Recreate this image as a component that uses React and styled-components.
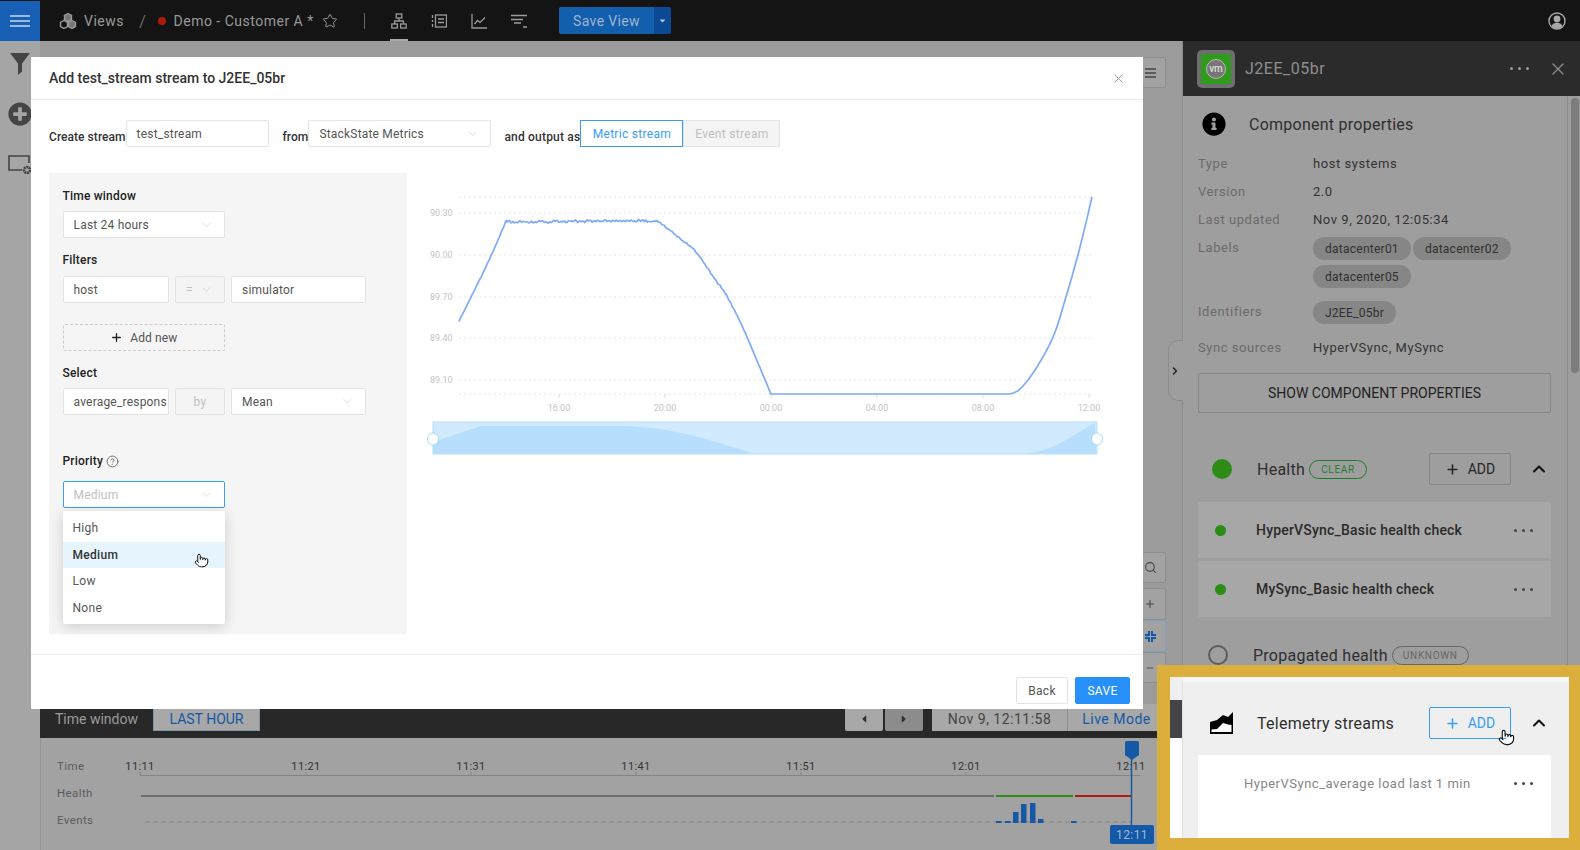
import React from 'react';
import styled, { createGlobalStyle } from 'styled-components';
import { Star, Search, Plus, Minus, X, ChevronDown, ChevronUp, ChevronRight, Pointer, CircleHelp } from 'lucide-react';
import { FaInfoCircle, FaPlusCircle, FaCaretLeft, FaCaretRight, FaCaretDown } from 'react-icons/fa';

const Global = createGlobalStyle`
  html, body { margin: 0; padding: 0; background: #9b9b9b; }
  * { box-sizing: border-box; }
  body { font-family: Roboto, "Liberation Sans", sans-serif; font-size: 13px; color: #333; }
`;

const Page = styled.div`
  position: relative;
  width: 1580px;
  height: 850px;
  overflow: hidden;
  display: flex;
  flex-direction: column;
`;

/* top bar */
const TopBar = styled.header`
  height: 41px;
  flex: none;
  display: flex;
  align-items: center;
  background: #141414;
  color: #999;
  font-size: 14px;
  letter-spacing: 0.5px;
`;
const MenuButton = styled.div`
  width: 40px;
  height: 40px;
  margin-top: 1px;
  flex: none;
  display: flex;
  flex-direction: column;
  justify-content: center;
  gap: 3px;
  padding: 0 10px;
  background: #1760b6;
  span { display: block; height: 2px; background: #9db9d9; }
`;
const Crumbs = styled.div`
  display: flex;
  align-items: center;
  margin-left: 19px;
  width: 305px;
  flex: none;
`;
const CrumbText = styled.span`
  margin-left: ${p => p.$gap}px;
`;
const StarSlot = styled.span`
  display: flex;
  margin-left: 8px;
`;
const Slash = styled.span`
  margin-left: 15px;
  color: #666;
  font-size: 17px;
`;
const StatusDot = styled.span`
  width: 8px;
  height: 8px;
  margin-left: 11px;
  border-radius: 50%;
  background: #ad1a0c;
`;
const Divider = styled.span`
  width: 1px;
  height: 16px;
  background: #666;
  flex: none;
`;
const ViewIcons = styled.div`
  display: flex;
  gap: 24px;
  margin-left: 26px;
  height: 41px;
`;
const ViewIcon = styled.div`
  width: 16px;
  display: flex;
  align-items: center;
  justify-content: center;
  position: relative;
  &::after {
    content: '';
    display: ${p => (p.$active ? 'block' : 'none')};
    position: absolute;
    left: -1px;
    right: -1px;
    bottom: 0;
    height: 2px;
    background: #aaa;
  }
`;
const SaveGroup = styled.div`
  display: flex;
  height: 27px;
  margin-left: 32px;
  border-radius: 2px;
  overflow: hidden;
  color: #9fb4cd;
  letter-spacing: 0.35px;
`;
const SaveMain = styled.div`
  width: 95px;
  display: flex;
  align-items: center;
  justify-content: center;
  background: #125fae;
`;
const SaveCaret = styled.div`
  width: 17px;
  display: flex;
  align-items: center;
  justify-content: center;
  background: #0c4a95;
`;
const UserSlot = styled.div`
  margin-left: auto;
  margin-right: 14px;
  display: flex;
`;

/* page body */
const Body = styled.div`
  flex: 1;
  display: flex;
  min-height: 0;
`;
const Sidebar = styled.aside`
  width: 40px;
  flex: none;
  background: #a5a5a5;
  display: flex;
  flex-direction: column;
  align-items: center;
  padding: 12px 0 0 0;
  gap: 27px;
  color: #444;
`;
const Main = styled.main`
  flex: 1;
  display: flex;
  flex-direction: column;
  min-width: 0;
`;
const Canvas = styled.div`
  flex: 1;
  display: flex;
  flex-direction: column;
  justify-content: space-between;
  align-items: flex-end;
  padding: 16px 16px 21px 0;
  background: #9b9b9b;
`;
const ToolGroup = styled.div`
  display: flex;
  flex-direction: column;
  gap: 5px;
`;
const ToolStack = styled.div`
  display: flex;
  flex-direction: column;
`;
const ToolButton = styled.div`
  width: 32px;
  height: ${p => p.$h || 32}px;
  display: flex;
  align-items: center;
  justify-content: center;
  background: #a2a2a2;
  border: 1px solid ${p => (p.$active ? '#7f9fbf' : '#8e8e8e')};
  border-radius: 2px;
  color: #444;
`;
const TimeBar = styled.div`
  height: 34px;
  flex: none;
  display: flex;
  align-items: stretch;
  padding: 0 24px 7px 15px;
  background: #282828;
  color: #9a9a9a;
  font-size: 14px;
`;
const TimeLabel = styled.div`
  display: flex;
  align-items: center;
  padding-top: 3px;
`;
const TimeTab = styled.div`
  margin-left: 15px;
  width: 107px;
  display: flex;
  align-items: center;
  justify-content: center;
  padding-top: 3px;
  background: #a8a8a8;
  border: 1px solid #7e98b2;
  border-top: 0;
  color: #1458a6;
`;
const TimeControls = styled.div`
  margin-left: auto;
  display: flex;
  align-items: stretch;
  letter-spacing: 0.5px;
`;
const StepButton = styled.div`
  width: 38px;
  margin-left: ${p => p.$ml || 0}px;
  display: flex;
  align-items: center;
  justify-content: center;
  padding-top: 3px;
  background: ${p => (p.$dim ? '#8c8c8c' : '#a8a8a8')};
  border-radius: 2px;
  color: #333;
`;
const DateBox = styled.div`
  width: 135px;
  margin-left: 9px;
  display: flex;
  align-items: center;
  justify-content: center;
  padding-top: 3px;
  background: #a8a8a8;
  color: #444;
`;
const LiveBox = styled.div`
  width: 91px;
  display: flex;
  align-items: center;
  justify-content: center;
  padding: 3px 0 0 7px;
  background: #a8a8a8;
  border-left: 1px solid #8e8e8e;
  color: #1458a6;
`;
const Timeline = styled.svg`
  display: block;
  width: 1142px;
  height: 112px;
  flex: none;
  background: #a2a2a2;
  font-family: Roboto, "Liberation Sans", sans-serif;
`;

/* right panel */
const Panel = styled.aside`
  position: relative;
  width: 398px;
  flex: none;
  background: #9e9e9e;
  border-left: 1px solid #8c8c8c;
  display: flex;
  flex-direction: column;
`;
const CollapseTab = styled.div`
  position: absolute;
  left: -15px;
  top: 299px;
  width: 15px;
  height: 61px;
  display: flex;
  align-items: center;
  background: #9e9e9e;
  border: 1px solid #8c8c8c;
  border-right: 0;
  border-radius: 10px 0 0 10px;
  color: #222;
`;
const PanelHeader = styled.div`
  height: 55px;
  flex: none;
  display: flex;
  align-items: center;
  padding: 0 12px 0 14px;
  background: #2b2b2b;
  color: #8f8f8f;
`;
const VmBadge = styled.div`
  width: 38px;
  height: 38px;
  flex: none;
  display: flex;
  align-items: center;
  justify-content: center;
  border-radius: 5px;
  background: #6e6e6e;
`;
const VmSquare = styled.div`
  width: 30px;
  height: 30px;
  display: flex;
  align-items: center;
  justify-content: center;
  background: #2f9a1c;
`;
const VmCircle = styled.div`
  width: 20px;
  height: 20px;
  display: flex;
  align-items: center;
  justify-content: center;
  border-radius: 50%;
  background: #777;
  border: 1.5px solid #bbb;
  color: #ddd;
  font-size: 10px;
  font-weight: 500;
`;
const PanelTitle = styled.div`
  margin-left: 10px;
  font-size: 16px;
  letter-spacing: 0.5px;
`;
const DotRow = styled.div`
  margin-left: auto;
  display: flex;
  gap: 5px;
  span {
    width: 3px;
    height: 3px;
    border-radius: 50%;
    background: ${p => p.$color || '#444'};
  }
`;
const CloseSlot = styled.div`
  display: flex;
  margin-left: 19px;
`;
const PanelBody = styled.div`
  flex: 1;
  min-height: 0;
  overflow: hidden;
  width: 385px;
  padding: 16px 16px 0 15px;
  border-right: 1px solid #8c8c8c;
`;
const Thumb = styled.div`
  position: absolute;
  right: 1px;
  top: 57px;
  width: 8px;
  height: 275px;
  border-radius: 4px;
  background: #7c7c7c;
`;
const SectionHead = styled.div`
  display: flex;
  align-items: center;
  padding-left: ${p => p.$indent}px;
  min-height: ${p => p.$h}px;
  margin-top: ${p => p.$mt || 0}px;
`;
const SectionTitle = styled.div`
  margin-left: ${p => p.$gap}px;
  font-size: 16px;
  letter-spacing: 0.25px;
  color: #2f2f2f;
`;
const PropRow = styled.div`
  display: grid;
  grid-template-columns: 115px 1fr;
  margin-top: ${p => p.$mt || 0}px;
  line-height: 28px;
  letter-spacing: 0.55px;
`;
const PropKey = styled.div`
  color: #6b6b6b;
`;
const PropValue = styled.div`
  color: #333;
`;
const Pills = styled.div`
  display: flex;
  flex-wrap: wrap;
  gap: 5px 2px;
  padding-top: 3px;
`;
const Pill = styled.span`
  height: 23px;
  padding: 0 12px;
  display: inline-flex;
  align-items: center;
  border-radius: 12px;
  background: #868686;
  color: #2f2f2f;
  font-size: 12px;
  letter-spacing: 0.25px;
`;
const WideButton = styled.div`
  height: 40px;
  margin-top: 11px;
  display: flex;
  align-items: center;
  justify-content: center;
  border: 1px solid #868686;
  border-radius: 2px;
  color: #222;
  font-size: 14px;
`;
const StatusBall = styled.span`
  width: 20px;
  height: 20px;
  flex: none;
  border-radius: 50%;
  background: ${p => (p.$hollow ? 'transparent' : '#2c8c16')};
  border: ${p => (p.$hollow ? '2px solid #5c5c5c' : '0')};
`;
const StatePill = styled.span`
  margin-left: 4px;
  height: 19px;
  width: ${p => p.$w}px;
  display: inline-flex;
  align-items: center;
  justify-content: center;
  border: 1px solid ${p => p.$color};
  border-radius: 10px;
  color: ${p => p.$color};
  font-size: 10px;
  letter-spacing: 0.7px;
`;
const AddButton = styled.div`
  margin-left: auto;
  width: 82px;
  height: 32px;
  display: flex;
  align-items: center;
  justify-content: center;
  gap: 8px;
  border: 1px solid ${p => (p.$active ? '#3a9df5' : '#858585')};
  border-radius: 2px;
  color: ${p => (p.$active ? '#3a9df5' : '#262626')};
  font-size: 14px;
`;
const Chevron = styled.div`
  display: flex;
  margin: 0 0 0 18px;
  width: 22px;
  color: #111;
`;
const CheckRow = styled.div`
  height: 56px;
  margin-top: ${p => p.$mt}px;
  display: flex;
  align-items: center;
  padding: 0 18px 0 17px;
  background: #a7a7a7;
`;
const CheckDot = styled.span`
  width: 11px;
  height: 11px;
  flex: none;
  border-radius: 50%;
  background: #2c8c16;
`;
const CheckName = styled.div`
  margin-left: 30px;
  font-size: 14px;
  font-weight: 500;
  letter-spacing: 0.2px;
  color: #2b2b2b;
`;

/* gold callout over the panel */
const Callout = styled.div`
  position: absolute;
  left: 1157px;
  top: 665px;
  right: 0;
  bottom: 0;
  border: solid #dcaf3c;
  border-width: 12px 11px 12px 13px;
  display: flex;
  z-index: 5;
`;
const CalloutStrip = styled.div`
  width: 12px;
  flex: none;
  display: flex;
  flex-direction: column;
  background: #fff;
  &::before { content: ''; height: 23px; background: #efefef; }
  &::after { content: ''; height: 38px; background: #444; }
`;
const CalloutPanel = styled.div`
  flex: 1;
  padding: 25px 18px 0 15px;
  background: #efefef;
  border-left: 1px solid #e0e0e0;
  border-top: 5px solid #f6f6f6;
  overflow: hidden;
`;
const StreamRow = styled.div`
  height: 90px;
  margin-top: 16px;
  display: flex;
  align-items: flex-start;
  padding: 21px 18px 0 46px;
  background: #fff;
  color: #858585;
  letter-spacing: 0.5px;
  ${DotRow} { margin-top: 6px; }
`;
const HandCursor = styled.div`
  position: absolute;
  left: ${p => p.$x}px;
  top: ${p => p.$y}px;
  display: flex;
  color: #111;
  z-index: 9;
  svg { fill: #fff; }
`;

/* modal */
const Modal = styled.section`
  position: absolute;
  left: 31px;
  top: 57px;
  width: 1112px;
  height: 652px;
  display: flex;
  flex-direction: column;
  background: #fff;
  z-index: 3;
`;
const ModalHead = styled.div`
  height: 43px;
  flex: none;
  display: flex;
  align-items: center;
  justify-content: space-between;
  padding: 0 17px 0 18px;
  border-bottom: 1px solid #ececec;
  font-size: 14px;
  font-weight: 500;
  color: #333;
`;
const ModalBody = styled.div`
  flex: 1;
  padding: 20px 0 0 18px;
  min-height: 0;
`;
const StreamForm = styled.div`
  display: flex;
  align-items: flex-end;
  font-size: 12px;
  font-weight: 500;
  color: #333;
`;
const InlineLabel = styled.label`
  margin-left: ${p => p.$ml || 0}px;
  padding-bottom: 3px;
  white-space: nowrap;
  letter-spacing: ${p => (p.$wide ? 0.2 : 0.05)}px;
`;
const Field = styled.div`
  width: ${p => p.$w}px;
  height: 27px;
  flex: none;
  display: flex;
  align-items: center;
  justify-content: ${p => (p.$center ? 'center' : 'space-between')};
  overflow: hidden;
  padding: 0 ${p => (p.$tight ? 4 : 10)}px 0 10px;
  ${p => (p.$center ? 'padding: 0;' : '')}
  background: ${p => (p.$disabled ? '#f4f4f4' : '#fff')};
  border: 1px solid ${p => (p.$focus ? '#3a9df5' : '#e3e3e3')};
  border-radius: 2px;
  color: ${p => (p.$muted ? '#c0c0c0' : '#555')};
  font-size: 12px;
  font-weight: 400;
  letter-spacing: 0.2px;
  white-space: nowrap;
  svg { flex: none; color: #c8c8c8; }
`;
const Segment = styled.div`
  width: ${p => p.$w}px;
  height: 27px;
  flex: none;
  display: flex;
  align-items: center;
  justify-content: center;
  background: ${p => (p.$on ? '#fff' : '#f4f4f4')};
  border: 1px solid ${p => (p.$on ? '#3a9df5' : '#e3e3e3')};
  color: ${p => (p.$on ? '#3a9df5' : '#c0c0c0')};
  font-weight: 400;
  letter-spacing: 0.3px;
`;
const Workspace = styled.div`
  display: flex;
  margin-top: 26px;
`;
const FormPanel = styled.div`
  position: relative;
  width: 358px;
  height: 461px;
  flex: none;
  padding: 15px 0 0 13.5px;
  background: #f5f5f5;
`;
const FieldLabel = styled.div`
  display: flex;
  align-items: center;
  gap: 3px;
  height: 16px;
  margin-top: ${p => p.$mt || 0}px;
  margin-bottom: ${p => p.$mb}px;
  font-size: 12px;
  font-weight: 500;
  letter-spacing: 0.2px;
  color: #222;
  svg { color: #555; }
`;
const FieldRow = styled.div`
  display: flex;
  gap: 6px;
`;
const DashedButton = styled.div`
  width: 162.5px;
  height: 27px;
  margin-top: 21px;
  display: flex;
  align-items: center;
  justify-content: center;
  gap: 7px;
  border: 1px dashed #ccc;
  border-radius: 2px;
  color: #555;
  font-size: 12px;
  letter-spacing: 0.1px;
  svg { color: #222; }
`;
const Menu = styled.ul`
  position: absolute;
  left: 13.5px;
  top: 338px;
  width: 162.5px;
  height: 113px;
  margin: 0;
  padding: 4px 0;
  list-style: none;
  background: #fff;
  border-radius: 2px;
  box-shadow: 0 3px 14px rgba(0, 0, 0, 0.16);
`;
const MenuItem = styled.li`
  height: 26.5px;
  display: flex;
  align-items: center;
  padding: 0 10px;
  font-size: 12px;
  letter-spacing: 0.3px;
  font-weight: ${p => (p.$on ? 500 : 400)};
  color: ${p => (p.$on ? '#333' : '#555')};
  background: ${p => (p.$on ? '#e6f5fd' : 'transparent')};
`;
const ChartSvg = styled.svg`
  display: block;
  width: 736px;
  height: 300px;
  flex: none;
  font-family: Roboto, "Liberation Sans", sans-serif;
`;
const ModalFoot = styled.div`
  height: 55px;
  flex: none;
  display: flex;
  justify-content: flex-end;
  gap: 7px;
  padding: 22px 13px 0 0;
  border-top: 1px solid #ececec;
`;
const FootButton = styled.div`
  width: ${p => p.$w}px;
  height: 27px;
  display: flex;
  align-items: center;
  justify-content: center;
  border-radius: 2px;
  border: 1px solid ${p => (p.$primary ? '#2890fb' : '#e3e3e3')};
  background: ${p => (p.$primary ? '#2890fb' : '#fff')};
  color: ${p => (p.$primary ? '#fff' : '#555')};
  font-size: 12px;
  letter-spacing: 0.3px;
`;

const Dots = ({ color }) => (
  <DotRow $color={color}><span /><span /><span /></DotRow>
);
const Caret = () => <ChevronDown size={15} strokeWidth={1} />;

const CubesIcon = () => (
  <svg width="18" height="18" viewBox="0 0 18 18" fill="none" stroke="#999" strokeWidth="1.4">
    <path d="M9 1.5l3.5 2v4L9 9.5l-3.5-2v-4z" fill="#777" />
    <path d="M5 8.5l3.5 2v4L5 16.5l-3.5-2v-4z" />
    <path d="M13 8.5l3.5 2v4L13 16.5l-3.5-2v-4z" fill="#777" />
  </svg>
);
const TreeIcon = () => (
  <svg width="16" height="16" viewBox="0 0 16 16" fill="none" stroke="#9a9a9a" strokeWidth="1.3">
    <rect x="5.2" y="1" width="5.6" height="4" />
    <rect x="0.8" y="11" width="5.6" height="4" />
    <rect x="9.6" y="11" width="5.6" height="4" />
    <path d="M8 5v3M3.6 11V8h8.8v3" />
  </svg>
);
const ListIcon = () => (
  <svg width="16" height="16" viewBox="0 0 16 16" fill="none" stroke="#9a9a9a" strokeWidth="1.3">
    <rect x="4.5" y="2" width="11" height="12" />
    <path d="M7 6h6M7 9.5h6M1.5 2v3M1.5 7v2M1.5 11v3" />
  </svg>
);
const LineIcon = () => (
  <svg width="16" height="16" viewBox="0 0 16 16" fill="none" stroke="#9a9a9a" strokeWidth="1.3">
    <path d="M1 1v14h15M3.5 11l3-3.5 2.5 2 5-5" />
  </svg>
);
const GanttIcon = () => (
  <svg width="16" height="16" viewBox="0 0 16 16" fill="none" stroke="#9a9a9a" strokeWidth="1.6">
    <path d="M0 2.5h16M0 6.5h12M3 10h7M12 14h4" />
  </svg>
);
const UserIcon = () => (
  <svg width="18" height="18" viewBox="0 0 18 18" fill="none">
    <circle cx="9" cy="9" r="8" stroke="#a8a8a8" strokeWidth="1.4" />
    <circle cx="9" cy="7" r="3.4" fill="#a8a8a8" />
    <path d="M3.5 14.2c1-2.6 3-3.4 5.5-3.4s4.5.8 5.5 3.4A7.5 7.5 0 0 1 3.5 14.2z" fill="#a8a8a8" />
  </svg>
);
const FunnelIcon = () => (
  <svg width="20" height="22" viewBox="0 0 20 22" fill="#444">
    <path d="M0 0h20L12 10.5v8L8 22V10.5z" />
  </svg>
);
const ScreenGearIcon = () => (
  <svg width="24" height="22" viewBox="0 0 24 22" fill="none" stroke="#444" strokeWidth="1.6">
    <path d="M14 17H1V3h20v7" />
    <circle cx="19" cy="17" r="3" strokeWidth="2.6" strokeDasharray="2 0.6" />
  </svg>
);
const TelemetryIcon = () => (
  <svg width="23" height="22" viewBox="0 0 23 22">
    <path d="M0 10L7 8L13 3L18 5L23 0V22H0Z" fill="#000" />
    <path d="M1.5 17.5L7 17L13 11L18 12.5L21.5 13V20H1.5Z" fill="#fff" />
  </svg>
);

// catmull-rom through the anchors, page coordinates, with a little jitter
const spline = (anchors, jitter) => {
  const pts = [];
  for (let i = 0; i < anchors.length - 1; i++) {
    const p0 = anchors[Math.max(i - 1, 0)];
    const p1 = anchors[i];
    const p2 = anchors[i + 1];
    const p3 = anchors[Math.min(i + 2, anchors.length - 1)];
    const steps = Math.max(2, Math.round((p2[0] - p1[0]) / 1.2));
    for (let s = 0; s < steps; s++) {
      const t = s / steps;
      const f = k => 0.5 * (2 * p1[k] + (p2[k] - p0[k]) * t + (2 * p0[k] - 5 * p1[k] + 4 * p2[k] - p3[k]) * t * t + (3 * p1[k] - p0[k] - 3 * p2[k] + p3[k]) * t * t * t);
      const x = f(0);
      pts.push(`${x.toFixed(1)},${(f(1) + jitter(x)).toFixed(1)}`);
    }
  }
  const last = anchors[anchors.length - 1];
  pts.push(`${last[0]},${last[1]}`);
  return pts;
};
const wobble = x => Math.sin(x * 1.7) * 0.7 + Math.sin(x * 4.3) * 0.6 + Math.sin(x * 0.37) * 0.4;
const metricLine = () => {
  const rise = spline([[459, 321], [481, 277], [495, 247], [506, 221]], x => wobble(x) * 0.3);
  const plateau = spline([[506, 221], [520, 222], [560, 221.5], [600, 221], [649, 221], [660, 223], [678, 237], [696, 252], [714, 278], [725, 293], [743, 328], [771, 394]], x => wobble(x) * (x < 650 ? 1 : x < 735 ? 0.6 : 0.15));
  const climb = spline([[1010, 394], [1020, 389], [1035, 370], [1053, 337], [1066, 297], [1080, 247], [1092, 197]], () => 0);
  return `M${[...rise, ...plateau, '1010,394', ...climb].join(' L')}`;
};
const METRIC_PATH = metricLine();

const Y_TICKS = [['90.30', 213], ['90.00', 255], ['89.70', 297], ['89.40', 338], ['89.10', 380]];
const X_TICKS = [['16:00', 559], ['20:00', 665], ['00:00', 771], ['04:00', 877], ['08:00', 983], ['12:00', 1089]];
const TIME_TICKS = [['11:11', 140], ['11:21', 306], ['11:31', 471], ['11:41', 636], ['11:51', 801], ['12:01', 966]];
const EVENT_BARS = [[996, 2], [1005, 2], [1013, 11], [1021, 19], [1030, 20], [1038, 4], [1071, 2]];

const MetricChart = () => (
  <ChartSvg viewBox="407 173 736 300">
    {[197, 213, 255, 297, 338, 380, 394].map(y => (
      <line key={y} x1="459" x2="1093" y1={y} y2={y} stroke="#e4e4e4" strokeDasharray="2 3" />
    ))}
    {Y_TICKS.map(([t, y]) => (
      <text key={t} x="430" y={y + 3} fontSize="9" fill="#c4c4c4">{t}</text>
    ))}
    {X_TICKS.map(([t, x]) => (
      <g key={t}>
        <line x1={x} x2={x} y1="394" y2="398" stroke="#ddd" />
        <text x={x} y="411" fontSize="9" fill="#c4c4c4" textAnchor="middle">{t}</text>
      </g>
    ))}
    <path d={METRIC_PATH} fill="none" stroke="#7eaaf8" strokeWidth="1.7" strokeLinejoin="round" />
    <rect x="433" y="422" width="664" height="32" fill="#d1eafe" stroke="#b4ddfd" />
    <path d="M433 442 L481 426 L624 426 C650 427 670 430 690 435 C715 441 735 448 756 454 L1026 454 C1038 452 1048 449 1057 445 C1072 437 1085 428 1095 423 L1096 454 L433 454 Z" fill="#b7defd" />
    <ellipse cx="433" cy="439" rx="5.5" ry="6" fill="#fff" stroke="#a6dcfb" />
    <ellipse cx="1097" cy="439" rx="5.5" ry="6" fill="#fff" stroke="#a6dcfb" />
  </ChartSvg>
);

const TimelineChart = () => (
  <Timeline viewBox="40 738 1142 112">
    <line x1="40.5" x2="40.5" y1="738" y2="850" stroke="#969696" />
    {[['Time', 770], ['Health', 797], ['Events', 824]].map(([t, y]) => (
      <text key={t} x="57" y={y} fontSize="11.5" letterSpacing="0.4" fill="#5c5c5c">{t}</text>
    ))}
    <line x1="140" x2="1140" y1="775.5" y2="775.5" stroke="#848484" />
    {TIME_TICKS.map(([t, x]) => (
      <g key={t}>
        <line x1={x} x2={x} y1="772" y2="775" stroke="#848484" />
        <text x={x} y="770" fontSize="11" letterSpacing="0.4" fill="#333" textAnchor="middle">{t}</text>
      </g>
    ))}
    <text x="1131" y="770" fontSize="11" letterSpacing="0.4" fill="#333" textAnchor="middle">12:11</text>
    <line x1="141" x2="994" y1="796" y2="796" stroke="#6b6f73" strokeWidth="2" />
    <line x1="996" x2="1073" y1="796" y2="796" stroke="#2c8c16" strokeWidth="2" />
    <line x1="1075" x2="1131" y1="796" y2="796" stroke="#ae1a0e" strokeWidth="2" />
    <line x1="145" x2="1131" y1="822" y2="822" stroke="#868686" strokeDasharray="5 3" />
    {EVENT_BARS.map(([x, h]) => (
      <rect key={x} x={x} y={823 - h} width="5.5" height={h} fill="#1458a6" />
    ))}
    <line x1="1131.5" x2="1131.5" y1="755" y2="826" stroke="#1458a6" strokeWidth="1.5" />
    <path d="M1125 743a2 2 0 0 1 2-2h10a2 2 0 0 1 2 2v12l-7 5-7-5z" fill="#1458a6" />
    <rect x="1110" y="825" width="44" height="19" rx="2" fill="#1458a6" />
    <text x="1132" y="839" fontSize="12" letterSpacing="0.4" fill="#9db9d9" textAnchor="middle">12:11</text>
  </Timeline>
);

const StreamModal = () => (
  <Modal>
    <ModalHead>
      Add test_stream stream to J2EE_05br
      <X size={15} strokeWidth={1.5} color="#999" />
    </ModalHead>
    <ModalBody>
      <StreamForm>
        <InlineLabel>Create stream</InlineLabel>
        <Field $w={143}>test_stream</Field>
        <InlineLabel $ml={14}>from</InlineLabel>
        <Field $w={183}>StackState Metrics<Caret /></Field>
        <InlineLabel $ml={13} $wide>and output as</InlineLabel>
        <Segment $on $w={103}>Metric stream</Segment>
        <Segment $w={97}>Event stream</Segment>
      </StreamForm>
      <Workspace>
        <FormPanel>
          <FieldLabel $mb={7}>Time window</FieldLabel>
          <Field $w={162.5}>Last 24 hours<Caret /></Field>
          <FieldLabel $mt={14} $mb={8}>Filters</FieldLabel>
          <FieldRow>
            <Field $w={106.5}>host</Field>
            <Field $w={50} $disabled $muted>=<Caret /></Field>
            <Field $w={135}>simulator</Field>
          </FieldRow>
          <DashedButton><Plus size={13} strokeWidth={2.5} />Add new</DashedButton>
          <FieldLabel $mt={14} $mb={7}>Select</FieldLabel>
          <FieldRow>
            <Field $w={106.5} $tight>average_respons</Field>
            <Field $w={50} $disabled $muted $center>by</Field>
            <Field $w={135}>Mean<Caret /></Field>
          </FieldRow>
          <FieldLabel $mt={38} $mb={12}>Priority <CircleHelp size={13} strokeWidth={1.5} /></FieldLabel>
          <Field $w={162.5} $focus $muted>Medium<Caret /></Field>
          <Menu>
            <MenuItem>High</MenuItem>
            <MenuItem $on>Medium</MenuItem>
            <MenuItem>Low</MenuItem>
            <MenuItem>None</MenuItem>
          </Menu>
        </FormPanel>
        <MetricChart />
      </Workspace>
    </ModalBody>
    <ModalFoot>
      <FootButton $w={52}>Back</FootButton>
      <FootButton $w={55} $primary>SAVE</FootButton>
    </ModalFoot>
  </Modal>
);

const App = () => (
  <Page>
    <Global />
    <TopBar>
      <MenuButton><span /><span /><span /></MenuButton>
      <Crumbs>
        <CubesIcon />
        <CrumbText $gap={7}>Views</CrumbText>
        <Slash>/</Slash>
        <StatusDot />
        <CrumbText $gap={8}>Demo - Customer A *</CrumbText>
        <StarSlot><Star size={16} strokeWidth={1.5} /></StarSlot>
      </Crumbs>
      <Divider />
      <ViewIcons>
        <ViewIcon $active><TreeIcon /></ViewIcon>
        <ViewIcon><ListIcon /></ViewIcon>
        <ViewIcon><LineIcon /></ViewIcon>
        <ViewIcon><GanttIcon /></ViewIcon>
      </ViewIcons>
      <SaveGroup>
        <SaveMain>Save View</SaveMain>
        <SaveCaret><FaCaretDown size={9} color="#b7c7dc" /></SaveCaret>
      </SaveGroup>
      <UserSlot><UserIcon /></UserSlot>
    </TopBar>

    <Body>
      <Sidebar>
        <FunnelIcon />
        <FaPlusCircle size={24} color="#444" />
        <ScreenGearIcon />
      </Sidebar>
      <Main>
        <Canvas>
          <ToolButton $h={31}>
            <svg width="11" height="12" viewBox="0 0 11 12" stroke="#444" strokeWidth="1.5"><path d="M0 2h11M0 6h11M0 10h11" /></svg>
          </ToolButton>
          <ToolGroup>
            <ToolButton $h={31}><Search size={13} /></ToolButton>
            <ToolStack>
              <ToolButton><Plus size={12} /></ToolButton>
              <ToolButton $active>
                <svg width="11" height="11" viewBox="0 0 11 11" fill="none" stroke="#1458a6" strokeWidth="2"><path d="M4 0v4H0M7 0v4h4M4 11V7H0M7 11V7h4" /></svg>
              </ToolButton>
              <ToolButton $h={31}><Minus size={10} /></ToolButton>
            </ToolStack>
          </ToolGroup>
        </Canvas>
        <TimeBar>
          <TimeLabel>Time window</TimeLabel>
          <TimeTab>LAST HOUR</TimeTab>
          <TimeControls>
            <StepButton><FaCaretLeft size={12} /></StepButton>
            <StepButton $dim $ml={2}><FaCaretRight size={12} /></StepButton>
            <DateBox>Nov 9, 12:11:58</DateBox>
            <LiveBox>Live Mode</LiveBox>
          </TimeControls>
        </TimeBar>
        <TimelineChart />
      </Main>
      <Panel>
        <CollapseTab><ChevronRight size={12} strokeWidth={3} /></CollapseTab>
        <PanelHeader>
          <VmBadge><VmSquare><VmCircle>vm</VmCircle></VmSquare></VmBadge>
          <PanelTitle>J2EE_05br</PanelTitle>
          <Dots color="#999" />
          <CloseSlot><X size={20} strokeWidth={1.5} /></CloseSlot>
        </PanelHeader>
        <Thumb />
        <PanelBody>
          <SectionHead $indent={4} $h={24}>
            <FaInfoCircle size={24} color="#000" />
            <SectionTitle $gap={23}>Component properties</SectionTitle>
          </SectionHead>
          <PropRow $mt={14}><PropKey>Type</PropKey><PropValue>host systems</PropValue></PropRow>
          <PropRow><PropKey>Version</PropKey><PropValue>2.0</PropValue></PropRow>
          <PropRow><PropKey>Last updated</PropKey><PropValue>Nov 9, 2020, 12:05:34</PropValue></PropRow>
          <PropRow>
            <PropKey>Labels</PropKey>
            <Pills>
              <Pill>datacenter01</Pill>
              <Pill>datacenter02</Pill>
              <Pill>datacenter05</Pill>
            </Pills>
          </PropRow>
          <PropRow $mt={10}>
            <PropKey>Identifiers</PropKey>
            <Pills><Pill>J2EE_05br</Pill></Pills>
          </PropRow>
          <PropRow $mt={8}><PropKey>Sync sources</PropKey><PropValue>HyperVSync, MySync</PropValue></PropRow>
          <WideButton>SHOW COMPONENT PROPERTIES</WideButton>

          <SectionHead $indent={14} $h={32} $mt={40}>
            <StatusBall />
            <SectionTitle $gap={25}>Health</SectionTitle>
            <StatePill $w={58} $color="#1f7d2e">CLEAR</StatePill>
            <AddButton><Plus size={15} strokeWidth={2.5} />ADD</AddButton>
            <Chevron><ChevronUp size={20} strokeWidth={2.5} /></Chevron>
          </SectionHead>
          <CheckRow $mt={17}>
            <CheckDot />
            <CheckName>HyperVSync_Basic health check</CheckName>
            <Dots />
          </CheckRow>
          <CheckRow $mt={3}>
            <CheckDot />
            <CheckName>MySync_Basic health check</CheckName>
            <Dots />
          </CheckRow>
          <SectionHead $indent={10} $h={20} $mt={28}>
            <StatusBall $hollow />
            <SectionTitle $gap={25}>Propagated health</SectionTitle>
            <StatePill $w={77} $color="#666">UNKNOWN</StatePill>
          </SectionHead>
        </PanelBody>
      </Panel>
    </Body>

    <StreamModal />

    <Callout>
      <CalloutStrip />
      <CalloutPanel>
        <SectionHead $indent={12} $h={32}>
          <TelemetryIcon />
          <SectionTitle $gap={24}>Telemetry streams</SectionTitle>
          <AddButton $active><Plus size={15} strokeWidth={2.5} />ADD</AddButton>
          <Chevron><ChevronUp size={20} strokeWidth={2.5} /></Chevron>
        </SectionHead>
        <StreamRow>
          HyperVSync_average load last 1 min
          <Dots />
        </StreamRow>
      </CalloutPanel>
    </Callout>

    <HandCursor $x={1498} $y={729}><Pointer size={17} strokeWidth={1.6} /></HandCursor>
    <HandCursor $x={194} $y={553}><Pointer size={15} strokeWidth={1.6} /></HandCursor>
  </Page>
);

export default App;
